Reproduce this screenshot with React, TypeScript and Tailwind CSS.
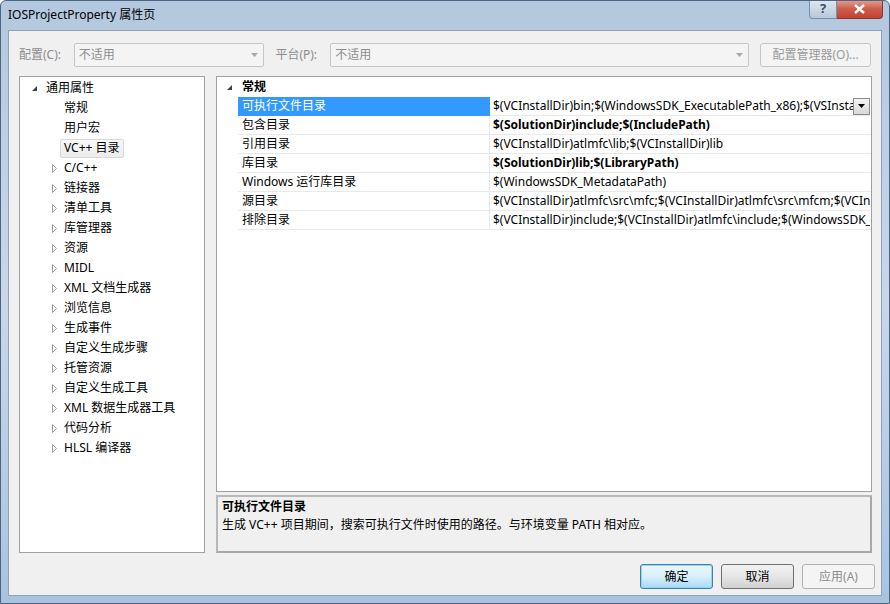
import React from 'react'

const font = { fontFamily: '"Noto Sans", "Noto Sans CJK SC", sans-serif' }

const treeItems = [
  { label: '常规', arrow: false },
  { label: '用户宏', arrow: false },
  { label: 'VC++ 目录', arrow: false, selected: true },
  { label: 'C/C++', arrow: true },
  { label: '链接器', arrow: true },
  { label: '清单工具', arrow: true },
  { label: '库管理器', arrow: true },
  { label: '资源', arrow: true },
  { label: 'MIDL', arrow: true },
  { label: 'XML 文档生成器', arrow: true },
  { label: '浏览信息', arrow: true },
  { label: '生成事件', arrow: true },
  { label: '自定义生成步骤', arrow: true },
  { label: '托管资源', arrow: true },
  { label: '自定义生成工具', arrow: true },
  { label: 'XML 数据生成器工具', arrow: true },
  { label: '代码分析', arrow: true },
  { label: 'HLSL 编译器', arrow: true },
]

const props = [
  { name: '可执行文件目录', value: '$(VCInstallDir)bin;$(WindowsSDK_ExecutablePath_x86);$(VSInstallDir)Common7\\Tools\\bin;$(VSInstallDir)Common7\\tools', selected: true },
  { name: '包含目录', value: '$(SolutionDir)include;$(IncludePath)', bold: true },
  { name: '引用目录', value: '$(VCInstallDir)atlmfc\\lib;$(VCInstallDir)lib' },
  { name: '库目录', value: '$(SolutionDir)lib;$(LibraryPath)', bold: true },
  { name: 'Windows 运行库目录', value: '$(WindowsSDK_MetadataPath)' },
  { name: '源目录', value: '$(VCInstallDir)atlmfc\\src\\mfc;$(VCInstallDir)atlmfc\\src\\mfcm;$(VCInstallDir)atlmfc\\src\\atl;$(VCInstallDir)crt\\src' },
  { name: '排除目录', value: '$(VCInstallDir)include;$(VCInstallDir)atlmfc\\include;$(WindowsSDK_IncludePath);$(MSBuild_ExecutablePath)' },
]

const Expanded = () => (
  <svg width="7" height="7" viewBox="0 0 7 7">
    <path d="M6 1 L6 6 L1 6 Z" fill="#404040" />
  </svg>
)

const Collapsed = () => (
  <svg width="7" height="9" viewBox="0 0 7 9">
    <path d="M1.5 0.5 L5.5 4.5 L1.5 8.5 Z" fill="white" stroke="#a0a0a0" />
  </svg>
)

const ComboArrow = () => (
  <svg width="7" height="4" viewBox="0 0 7 4">
    <path d="M0 0 L7 0 L3.5 4 Z" fill="#a8a8a8" />
  </svg>
)

const App: React.FC = () => {
  return (
    <div
      className="w-[890px] h-[604px] flex flex-col bg-gradient-to-b from-[#b3c8de] via-[#c8d8e9] to-[#a9c3df] border border-[#4b6582] rounded-t-[6px] overflow-hidden text-[12px] text-black"
      style={font}
    >
      {/* Title bar */}
      <div className="h-[29px] flex items-start justify-between shrink-0">
        <div className="pl-[7px] pt-[5px] leading-[18px]">IOSProjectProperty 属性页</div>
        <div className="flex mr-[6px] mt-[-1px]">
          <div className="w-[28px] h-[19px] flex items-center justify-center border border-[#7a8ea5] border-t-0 rounded-bl-[4px] bg-gradient-to-b from-[#dfe8f2] to-[#b7c8da] text-[#3c4d60] text-[13px] font-bold">?</div>
          <div className="w-[46px] h-[19px] flex items-center justify-center border border-[#7d3a34] border-t-0 border-l-0 rounded-br-[4px] bg-gradient-to-b from-[#e0a196] via-[#cc5c4c] to-[#c8412f]">
            <svg width="11" height="10" viewBox="0 0 11 10">
              <path d="M1 1 L10 9 M10 1 L1 9" stroke="#ffffff" strokeWidth="2.4" />
            </svg>
          </div>
        </div>
      </div>

      {/* Client area */}
      <div className="flex-1 mx-[7px] mb-[7px] bg-[#f0f0f0] border border-[#8ea3ba] flex flex-col px-[10px] pt-[12px] min-w-0">
        {/* Config row */}
        <div className="h-[24px] flex items-center shrink-0">
          <span className="text-[#8d8d8d] w-[55px]">配置(C):</span>
          <div className="w-[191px] h-[24px] flex items-center justify-between border border-[#c6c6c6] rounded-[2px] bg-[#f4f4f4] pl-[4px] pr-[5px] text-[#8d8d8d]">
            <span>不适用</span>
            <ComboArrow />
          </div>
          <span className="text-[#8d8d8d] ml-[11px] w-[55px]">平台(P):</span>
          <div className="w-[420px] h-[24px] flex items-center justify-between border border-[#c6c6c6] rounded-[2px] bg-[#f4f4f4] pl-[4px] pr-[5px] text-[#8d8d8d]">
            <span>不适用</span>
            <ComboArrow />
          </div>
          <div className="ml-[11px] w-[111px] h-[24px] flex items-center justify-center border border-[#c2c6ca] rounded-[3px] bg-[#f4f4f4] text-[#9a9a9a]">
            配置管理器(O)...
          </div>
        </div>

        {/* Panels */}
        <div className="mt-[9px] flex gap-[11px] h-[477px] shrink-0 w-[853px]">
          {/* Tree */}
          <div className="w-[186px] shrink-0 bg-white border border-[#a0a0a0] pt-[1px] whitespace-nowrap">
            <div className="h-[20px] flex items-center pl-[11px]">
              <span className="w-[15px] flex pt-[1px]"><Expanded /></span>
              <span>通用属性</span>
            </div>
            {treeItems.map((it) => (
              <div key={it.label} className="h-[20px] flex items-center pl-[31px]">
                <span className="w-[13px] shrink-0 flex">{it.arrow ? <Collapsed /> : null}</span>
                {it.selected ? (
                  <span className="ml-[-4px] px-[3px] h-[19px] flex items-center border border-[#d9d9d9] rounded-[2px] bg-gradient-to-b from-[#f8f8f8] to-[#ececec]">
                    {it.label}
                  </span>
                ) : (
                  <span>{it.label}</span>
                )}
              </div>
            ))}
          </div>

          {/* Right column */}
          <div className="flex-1 min-w-0 flex flex-col gap-[3px]">
            <div className="h-[416px] bg-white border border-[#a0a0a0] flex flex-col overflow-hidden">
              <div className="h-[20px] flex items-center shrink-0">
                <span className="w-[21px] flex justify-end pr-[5px] pt-[1px]"><Expanded /></span>
                <span className="font-bold pl-[4px]">常规</span>
              </div>
              {props.map((p) => (
                <div key={p.name} className="h-[19px] flex shrink-0">
                  <div className="w-[21px] shrink-0" />
                  <div
                    className={
                      p.selected
                        ? 'w-[252px] shrink-0 pl-[4px] flex items-center bg-[#3399ff] text-white border-b border-[#3399ff] whitespace-nowrap'
                        : 'w-[252px] shrink-0 pl-[4px] flex items-center border-b border-r border-[#e9e9e9] whitespace-nowrap'
                    }
                  >
                    {p.name}
                  </div>
                  <div className="flex-1 min-w-0 flex items-center border-b border-[#e9e9e9] pl-[3px] pr-[1px]">
                    <span className={p.bold ? 'flex-1 min-w-0 overflow-hidden whitespace-nowrap font-bold' : 'flex-1 min-w-0 overflow-hidden whitespace-nowrap'}>
                      {p.value}
                    </span>
                    {p.selected ? (
                      <div className="w-[17px] h-[17px] shrink-0 flex items-center justify-center border border-[#8a8a8a] bg-gradient-to-b from-[#f6f6f6] to-[#d8d8d8]">
                        <svg width="7" height="4" viewBox="0 0 7 4">
                          <path d="M0 0 L7 0 L3.5 4 Z" fill="#000000" />
                        </svg>
                      </div>
                    ) : null}
                  </div>
                </div>
              ))}
            </div>

            {/* Description */}
            <div className="flex-1 border-2 border-[#a8a8a8] border-t-[#b8b8b8] border-l-[#b8b8b8] bg-[#f0f0f0] px-[4px] pt-[1px] leading-[18px]">
              <div className="font-bold">可执行文件目录</div>
              <div>生成 VC++ 项目期间，搜索可执行文件时使用的路径。与环境变量 PATH 相对应。</div>
            </div>
          </div>
        </div>

        {/* Buttons */}
        <div className="mt-[11px] flex justify-end gap-[8px] mr-[-4px]">
          <div className="w-[73px] h-[25px] flex items-center justify-center rounded-[3px] border border-[#3c7fb1] bg-gradient-to-b from-[#eaf6fd] via-[#d9f0fc] to-[#a7d9f5] shadow-[inset_0_0_0_1px_#94d5f5]">
            确定
          </div>
          <div className="w-[73px] h-[25px] flex items-center justify-center rounded-[3px] border border-[#707070] bg-gradient-to-b from-[#f2f2f2] via-[#e6e6e6] to-[#d0d0d0]">
            取消
          </div>
          <div className="w-[73px] h-[25px] flex items-center justify-center rounded-[3px] border border-[#adb2b5] bg-[#f4f4f4] text-[#8d8d8d]">
            应用(A)
          </div>
        </div>
      </div>
    </div>
  )
}

export default App
